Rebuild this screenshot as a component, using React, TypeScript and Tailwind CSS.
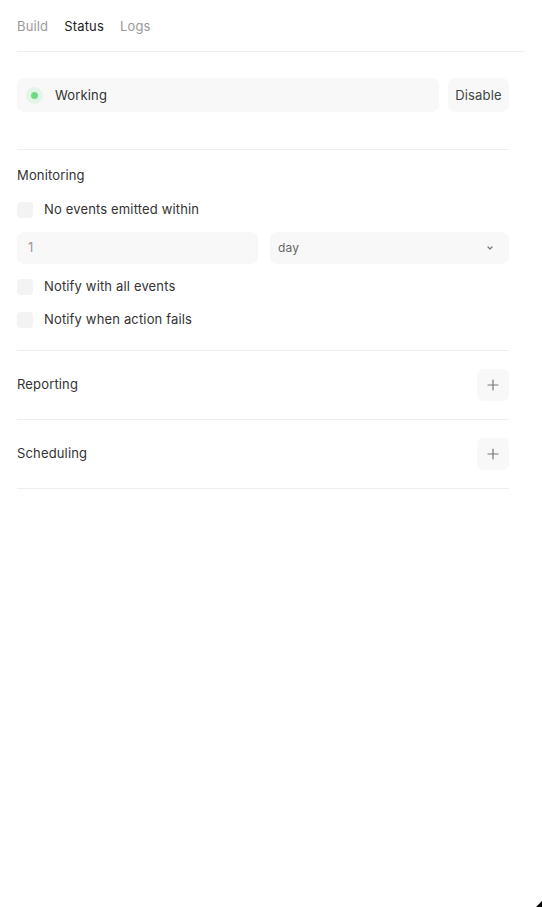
import React from "react";

function Checkbox({ label }: { label: string }) {
  return (
    <div className="flex items-center h-[24px]">
      <div className="w-[16px] h-[16px] rounded-[4px] bg-[#f3f3f3]" />
      <span className="ml-[11px] text-[#333]">{label}</span>
    </div>
  );
}

function Plus() {
  return (
    <button className="w-[32px] h-[32px] rounded-[6px] bg-[#f8f8f8] flex items-center justify-center">
      <svg width="12" height="12" viewBox="0 0 12 12" fill="none" stroke="#777" strokeWidth="1.2" strokeLinecap="round">
        <path d="M6 1v10M1 6h10" />
      </svg>
    </button>
  );
}

export default function App() {
  return (
    <div
      className="relative w-[542px] h-[907px] bg-white px-[17px] text-[13px] tracking-[0.012em] text-[#333]"
      style={{ fontFamily: "Inter, 'Noto Sans', sans-serif" }}
    >
      <div className="h-[52px] pt-[2px] flex items-center gap-[16px] border-b border-[#efefef]">
        <span className="text-[#999]">Build</span>
        <span className="text-[#222]">Status</span>
        <span className="text-[#999]">Logs</span>
      </div>
      <div className="mr-[16px]">
        <div className="mt-[26px] flex h-[34px] gap-[9px]">
          <div className="flex-1 rounded-[7px] bg-[#f8f8f8] flex items-center pl-[9px] pt-[1px]">
            <div className="w-[17px] h-[17px] rounded-full bg-[#e3f5e6] flex items-center justify-center">
              <div className="w-[7px] h-[7px] rounded-full bg-[#6fd98a]" />
            </div>
            <span className="ml-[12px] text-[#333]">Working</span>
          </div>
          <button className="w-[61px] pt-[1px] rounded-[7px] bg-[#f8f8f8] text-[#444] text-[13px]">Disable</button>
        </div>

        <div className="mt-[37px] border-t border-[#efefef] flex flex-col">
          <div className="mt-[15px] h-[20px] leading-[20px] text-[#333]">Monitoring</div>
          <div className="mt-[13px]">
            <Checkbox label="No events emitted within" />
          </div>
          <div className="mt-[10px] flex h-[32px] gap-[12px]">
            <div className="w-[241px] rounded-[7px] bg-[#f8f8f8] flex items-center pl-[11px] text-[#999]">1</div>
            <div className="flex-1 rounded-[7px] bg-[#f8f8f8] flex items-center justify-between pl-[8px] pr-[15px] text-[#666] text-[12px]">
              <span>day</span>
              <svg width="8" height="6" viewBox="0 0 8 6" fill="none" stroke="#777" strokeWidth="1.2" strokeLinecap="round" strokeLinejoin="round">
                <path d="M2 2l2 2 2-2" />
              </svg>
            </div>
          </div>
          <div className="mt-[11px]">
            <Checkbox label="Notify with all events" />
          </div>
          <div className="mt-[9px]">
            <Checkbox label="Notify when action fails" />
          </div>
        </div>

        <div className="mt-[18px] border-t border-[#efefef] h-[69px] flex items-center justify-between">
          <span>Reporting</span>
          <Plus />
        </div>
        <div className="border-t border-b border-[#efefef] h-[70px] flex items-center justify-between">
          <span>Scheduling</span>
          <Plus />
        </div>
      </div>
      <div className="absolute right-0 bottom-0 w-0 h-0 border-l-[6px] border-l-transparent border-b-[6px] border-b-black" />
    </div>
  );
}
